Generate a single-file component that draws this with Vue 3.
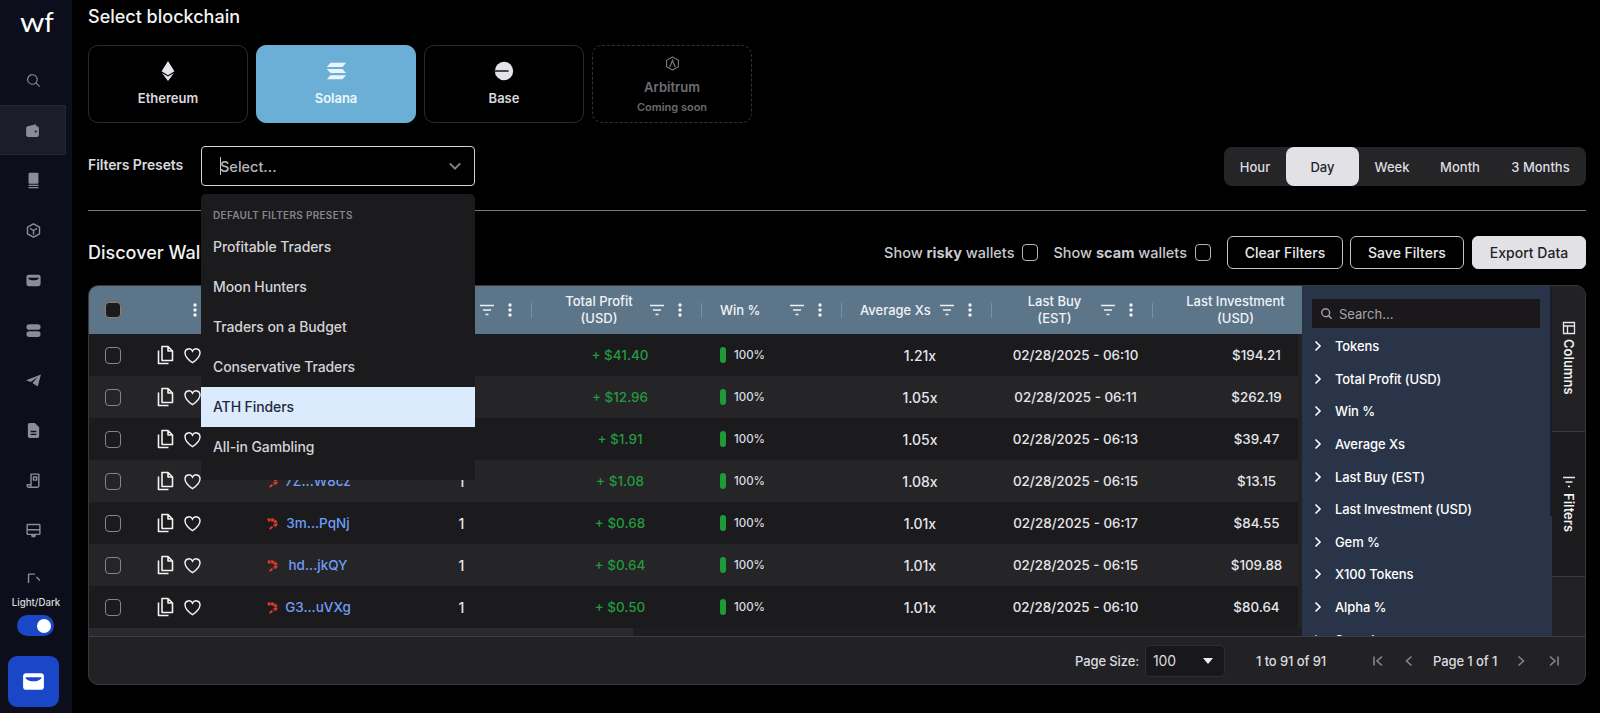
<script setup>
const navIcons = [
  { d: 'M10.5 3a7.5 7.5 0 1 0 4.7 13.3l5 5 1.1-1.1-5-5A7.5 7.5 0 0 0 10.5 3zm0 1.5a6 6 0 1 1 0 12 6 6 0 0 1 0-12z' },
  { d: 'M3 8.5A2.5 2.5 0 0 1 5.5 6L17 3v3h1.5A2.5 2.5 0 0 1 21 8.5v10a2.5 2.5 0 0 1-2.5 2.5h-13A2.5 2.5 0 0 1 3 18.5zM15 13.5a1.5 1.5 0 1 0 3 0 1.5 1.5 0 0 0-3 0z', active: true },
  { d: 'M6.5 1h11A1.5 1.5 0 0 1 19 2.500V15a1.500 1.500 0 0 1-1.500 1.500h-11A1.500 1.500 0 0 1 5 15V2.500A1.500 1.500 0 0 1 6.500 1zM5 18h14v1.800H5zM5 21h14v1.800H5z' },
  { d: 'M12 2.500l8.500 4.800v9.400L12 21.500l-8.500-4.800V7.300zM12 12l-5-3M12 12l5-3M12 12v6', stroke: true },
  { d: 'M5 4h14a3 3 0 0 1 3 3v10a3 3 0 0 1-3 3H5a3 3 0 0 1-3-3V7a3 3 0 0 1 3-3zM4.500 8h15v1c-2 2-4.500 2.700-7.500 2.700S6.500 11 4.500 9z' },
  { d: 'M6 3h12a4 4 0 0 1 0 8H6a4 4 0 0 1 0-8zM6 13h12a4 4 0 0 1 0 8H6a4 4 0 0 1 0-8z' },
  { d: 'M22.500 3.500L1.500 11.500l6.500 2.500L18 7l-7.500 8.500L18 20.500z' },
  { d: 'M6.500 1.500H14l6 6V20a2.500 2.500 0 0 1-2.500 2.500h-11A2.500 2.500 0 0 1 4 20V4a2.500 2.500 0 0 1 2.500-2.500zM8 12.500v2h8v-2zM8 16.500v2h8v-2z' },
  { d: 'M7 21.500h10.500a2 2 0 0 0 2-2V3h-11v16.500a2 2 0 0 1-2 2H5a2 2 0 0 1-2-2V18h5.500M12 7h4.500v4.500H12z', stroke: true },
  { d: 'M4 2.500h16a2 2 0 0 1 2 2v12a2 2 0 0 1-2 2h-4.500l-1 3h-5l-1-3H4a2 2 0 0 1-2-2v-12a2 2 0 0 1 2-2zM4 4.500V10h16V4.500zM4 12v4.500h16V12z' },
  { d: 'M14 3H5v18h9M16 7l5 5', stroke: true }
]

const chains = [
  { name: 'Ethereum', key: 'eth' },
  { name: 'Solana', key: 'sol' },
  { name: 'Base', key: 'base' }
]

const presets = ['Profitable Traders', 'Moon Hunters', 'Traders on a Budget', 'Conservative Traders', 'ATH Finders', 'All-in Gambling']
const ranges = ['Hour', 'Day', 'Week', 'Month', '3 Months']

const headers = [
  { label: 'Total Profit\n(USD)', center: true },
  { label: 'Win %' },
  { label: 'Average Xs' },
  { label: 'Last Buy\n(EST)', center: true },
  { label: 'Last Investment\n(USD)', center: true }
]

const rows = [
  { addr: '', profit: '+ $41.40', xs: '1.21x', date: '02/28/2025 - 06:10', inv: '$194.21' },
  { addr: '', profit: '+ $12.96', xs: '1.05x', date: '02/28/2025 - 06:11', inv: '$262.19' },
  { addr: '', profit: '+ $1.91', xs: '1.05x', date: '02/28/2025 - 06:13', inv: '$39.47' },
  { addr: '7Z...W8cz', profit: '+ $1.08', xs: '1.08x', date: '02/28/2025 - 06:15', inv: '$13.15' },
  { addr: '3m...PqNj', profit: '+ $0.68', xs: '1.01x', date: '02/28/2025 - 06:17', inv: '$84.55' },
  { addr: 'hd...jkQY', profit: '+ $0.64', xs: '1.01x', date: '02/28/2025 - 06:15', inv: '$109.88' },
  { addr: 'G3...uVXg', profit: '+ $0.50', xs: '1.01x', date: '02/28/2025 - 06:10', inv: '$80.64' }
]

const columns = ['Tokens', 'Total Profit (USD)', 'Win %', 'Average Xs', 'Last Buy (EST)', 'Last Investment (USD)', 'Gem %', 'X100 Tokens', 'Alpha %', 'Spend']
</script>

<template>
  <div class="page">
    <aside class="sidebar">
      <div class="logo"><span class="logo-w">w</span>f</div>
      <nav class="nav">
        <div v-for="(ic, i) in navIcons" :key="i" class="nav-item" :class="{ active: ic.active }">
          <svg class="nav-icon" viewBox="0 0 24 24">
            <path v-if="ic.stroke" :d="ic.d" fill="none" stroke="currentColor" stroke-width="2" stroke-linejoin="round" />
            <path v-else :d="ic.d" fill="currentColor" fill-rule="evenodd" />
          </svg>
        </div>
      </nav>
      <div class="mode">
        <span class="mode-label">Light/Dark</span>
        <span class="toggle"><span class="knob"></span></span>
      </div>
      <button class="wallet-btn">
        <svg viewBox="0 0 24 24" width="25" height="25">
          <path fill="#fff" fill-rule="evenodd" d="M5 4h14a3 3 0 0 1 3 3v10a3 3 0 0 1-3 3H5a3 3 0 0 1-3-3V7a3 3 0 0 1 3-3zM4.500 8h15v1c-2 2-4.500 2.700-7.500 2.700S6.500 11 4.500 9z" />
        </svg>
      </button>
    </aside>

    <main class="main">
      <h1 class="title">Select blockchain</h1>

      <div class="chains">
        <div v-for="c in chains" :key="c.key" class="chain" :class="{ selected: c.key === 'sol' }">
          <svg v-if="c.key === 'eth'" class="chain-icon" viewBox="0 0 24 24" width="22" height="22">
            <path fill="#e6e6ea" d="M12 1L5 12.400 12 16.500l7-4.100z" />
            <path fill="#e6e6ea" d="M5.500 14.200L12 23l6.500-8.800L12 18z" />
          </svg>
          <svg v-else-if="c.key === 'sol'" class="chain-icon" viewBox="0 0 24 24" width="22" height="22">
            <path fill="#e9f5fc" d="M6 3h17l-4 4.500H2zM2 9.800h17l4 4.500H6zM6 16.500h17l-4 4.500H2z" />
          </svg>
          <svg v-else class="chain-icon" viewBox="0 0 24 24" width="22" height="22">
            <circle cx="12" cy="12" r="10" fill="#e4e4e8" />
            <rect x="2" y="11" width="15" height="2" fill="#3a3a3e" />
          </svg>
          <span class="chain-name">{{ c.name }}</span>
        </div>
        <div class="chain soon">
          <svg viewBox="0 0 24 24" width="15" height="15">
            <path fill="none" stroke="#77777b" stroke-width="1.800" d="M12 1.500l9.500 5.300v10.400L12 22.500l-9.500-5.300V6.800z" />
            <path fill="none" stroke="#77777b" stroke-width="2" d="M7.500 18L12 7l4.500 11" />
          </svg>
          <span class="soon-name">Arbitrum</span>
          <span class="soon-sub">Coming soon</span>
        </div>
      </div>

      <div class="preset-row">
        <span class="preset-label">Filters Presets</span>
        <div class="select-wrap">
          <div class="select">
            <span class="caret"></span>
            <span class="select-text">Select...</span>
            <svg class="select-chev" viewBox="0 0 16 16" width="14" height="14">
              <path d="M2 5L8 11l6-6" fill="none" stroke="#858585" stroke-width="2.200" />
            </svg>
          </div>
          <div class="menu">
            <div class="menu-head">DEFAULT FILTERS PRESETS</div>
            <div v-for="p in presets" :key="p" class="menu-item" :class="{ focus: p === 'ATH Finders' }">{{ p }}</div>
          </div>
        </div>
        <div class="ranges">
          <span v-for="r in ranges" :key="r" class="range" :class="{ on: r === 'Day' }">{{ r }}</span>
        </div>
      </div>

      <hr class="divider" />

      <div class="toolbar">
        <h2 class="discover">Discover Wallets</h2>
        <div class="tools">
          <label class="show">Show <b>risky</b> wallets<span class="box"></span></label>
          <label class="show">Show <b>scam</b> wallets<span class="box"></span></label>
          <button class="btn clear">Clear Filters</button>
          <button class="btn save">Save Filters</button>
          <button class="btn export">Export Data</button>
        </div>
      </div>

      <section class="table">
        <div class="table-top">
          <div class="center">
            <div class="thead grid">
              <div class="th first">
                <span class="hcheck"></span>
                <svg class="dots dots-first" viewBox="0 0 14 16" width="14" height="16"><circle cx="7" cy="3" r="1.700" /><circle cx="7" cy="8" r="1.700" /><circle cx="7" cy="13" r="1.700" /></svg>
              </div>
              <div class="th"></div>
              <div class="th ctrl sep">
                <svg class="fil" viewBox="0 0 18 14" width="18" height="14"><path d="M2 2.500h14M5 7h8M7.500 11.500h3" /></svg>
                <svg class="dots" viewBox="0 0 14 16" width="14" height="16"><circle cx="7" cy="3" r="1.700" /><circle cx="7" cy="8" r="1.700" /><circle cx="7" cy="13" r="1.700" /></svg>
              </div>
              <div v-for="(h, i) in headers" :key="h.label" class="th ctrl" :class="{ sep: i < 4 }">
                <span class="hlabel" :class="{ centered: h.center }">{{ h.label }}</span>
                <svg class="fil" viewBox="0 0 18 14" width="18" height="14"><path d="M2 2.500h14M5 7h8M7.500 11.500h3" /></svg>
                <svg class="dots" viewBox="0 0 14 16" width="14" height="16"><circle cx="7" cy="3" r="1.700" /><circle cx="7" cy="8" r="1.700" /><circle cx="7" cy="13" r="1.700" /></svg>
              </div>
            </div>
            <div class="tbody">
              <div v-for="(r, i) in rows" :key="i" class="grid row" :class="{ alt: i % 2 === 1 }">
                <div class="td actions">
                  <span class="rcheck"></span>
                  <svg class="copy" viewBox="0 0 18 20" width="18" height="20">
                    <path d="M6 1.500h6l4.500 4.500v9.500H6zM12 1.500V6h4.500M2.500 5.500v13h10" />
                  </svg>
                  <svg class="heart" viewBox="0 0 24 24" width="19" height="19">
                    <path d="M12 21S2.500 15 2.500 8.600A5 5 0 0 1 12 6.400a5 5 0 0 1 9.500 2.200C21.500 15 12 21 12 21z" />
                  </svg>
                </div>
                <div class="td addr">
                  <template v-if="r.addr">
                    <svg class="shrimp" viewBox="0 0 16 14" width="15" height="13">
                      <path d="M0.500 0.500L4 2" stroke="#3b1512" stroke-width="1" fill="none" />
                      <path d="M4 3.500c4.500-1.500 8.500 .5 9 3 .3 2-1.500 2.500-3 3" stroke="#e33b2c" stroke-width="3.400" fill="none" stroke-dasharray="3 .6" />
                      <path d="M9 10.500l-3 2.500" stroke="#e33b2c" stroke-width="2" fill="none" />
                    </svg>
                    <span class="addr-text">{{ r.addr }}</span>
                  </template>
                </div>
                <div class="td num one">1</div>
                <div class="td profit shift">{{ r.profit }}</div>
                <div class="td win"><span class="bar"></span><span class="pct">100%</span></div>
                <div class="td num shift">{{ r.xs }}</div>
                <div class="td num shift date">{{ r.date }}</div>
                <div class="td num shift date">{{ r.inv }}</div>
              </div>
            </div>
            <div class="hscroll"><span class="thumb"></span></div>
          </div>

          <div class="panel">
            <div class="psearch">
              <svg viewBox="0 0 24 24" width="13" height="13">
                <path fill="#a8a8a8" fill-rule="evenodd" d="M10.500 2a8.500 8.500 0 1 0 5 15.400l5 5 1.800-1.800-5-5A8.500 8.500 0 0 0 10.500 2zm0 2.500a6 6 0 1 1 0 12 6 6 0 0 1 0-12z" />
              </svg>
              <span>Search...</span>
            </div>
            <div class="plist">
              <div v-for="c in columns" :key="c" class="pitem">
                <svg viewBox="0 0 10 12" width="10" height="12"><path d="M2.500 1.500L7 6l-4.500 4.500" fill="none" stroke="#fff" stroke-width="1.600" /></svg>
                <span>{{ c }}</span>
              </div>
            </div>
            <span class="pscroll"></span>
          </div>

          <div class="rail">
            <div class="tab columns">
              <svg viewBox="0 0 14 14" width="14" height="14"><path d="M1.500 1.500h11v11h-11zM1.500 5h11M5.500 5v7.500" fill="none" stroke="#e8e8e8" stroke-width="1.300" /></svg>
              <span>Columns</span>
            </div>
            <div class="tab filters">
              <svg viewBox="0 0 14 14" width="14" height="14"><path d="M1 2.500h12M3.500 7h7M6 11.500h2" fill="none" stroke="#e8e8e8" stroke-width="1.500" /></svg>
              <span>Filters</span>
            </div>
          </div>
        </div>

        <footer class="pager">
          <span class="psize">Page Size:</span>
          <div class="size-box"><span>100</span><i class="tri"></i></div>
          <span class="count">1 to 91 of 91</span>
          <svg class="pg first-pg" viewBox="0 0 12 12" width="12" height="12"><path d="M2 1.500v9M10 1.500L5 6l5 4.500" /></svg>
          <svg class="pg prev-pg" viewBox="0 0 12 12" width="12" height="12"><path d="M8.500 1.500L3.500 6l5 4.500" /></svg>
          <span class="pageof">Page 1 of 1</span>
          <svg class="pg next-pg" viewBox="0 0 12 12" width="12" height="12"><path d="M3.500 1.500L8.500 6l-5 4.500" /></svg>
          <svg class="pg last-pg" viewBox="0 0 12 12" width="12" height="12"><path d="M10 1.500v9M2 1.500L7 6l-5 4.500" /></svg>
        </footer>
      </section>
    </main>
  </div>
</template>

<style>
html, body { margin: 0; background: #000; }
</style>

<style scoped>
.page {
  display: flex;
  width: 1600px;
  height: 713px;
  overflow: hidden;
  background: #000;
  color: #e6e6ea;
  font-family: "Inter", "Liberation Sans", sans-serif;
  font-size: 14px;
  font-weight: 500;
}
.sidebar {
  width: 72px;
  flex: none;
  background: #0c0f1b;
  display: flex;
  flex-direction: column;
}
.logo {
  height: 55px;
  box-sizing: border-box;
  padding: 3px 0 0 20px;
  font-family: "Lato", sans-serif;
  font-size: 27px;
  line-height: 38px;
  font-weight: 400;
  color: #fff;
}
.logo-w { display: inline-block; transform: scaleX(1.150); transform-origin: left; margin-right: 3px; }
.nav { height: 528px; overflow: hidden; flex: none; }
.nav-item {
  width: 66px;
  height: 50px;
  box-sizing: border-box;
  display: flex;
  align-items: center;
  justify-content: center;
  color: #8a8c98;
}
.nav-item.active { background: #1b1d28; border: 1px solid #23252f; border-left: 0; }
.nav-icon { width: 17px; height: 17px; }
.mode { display: flex; flex-direction: column; align-items: center; height: 73px; width: 72px; box-sizing: border-box; padding-top: 14px; }
.mode-label { font-size: 9.700px; line-height: 12px; color: #dcdcdc; }
.toggle {
  margin: 6px 0 0 -2px;
  width: 37px;
  height: 21px;
  border-radius: 11px;
  background: #1a47c8;
  display: flex;
  align-items: center;
  justify-content: flex-end;
  padding-right: 3px;
  box-sizing: border-box;
}
.knob { width: 14px; height: 14px; border-radius: 50%; background: #fff; }
.wallet-btn {
  margin-left: 8px;
  width: 51px;
  height: 51px;
  border: 0;
  padding: 0;
  border-radius: 9px;
  background: #1a47c8;
  display: flex;
  align-items: center;
  justify-content: center;
}

.main { flex: 1; min-width: 0; padding: 0 14px 0 16px; }
.title { margin: 0; height: 32px; font-size: 18px; line-height: 33px; font-weight: 500; color: #f2f2f2; }

.chains { display: flex; gap: 8px; margin-top: 13px; }
.chain {
  width: 160px;
  height: 78px;
  box-sizing: border-box;
  border: 1px solid #2b2b2e;
  border-radius: 10px;
  display: flex;
  flex-direction: column;
  align-items: center;
  padding-top: 14px;
}
.chain-name { margin-top: 8px; font-size: 13px; line-height: 16px; font-weight: 600; color: #d9d9de; }
.chain.selected { background: #6bafd6; border-color: #6bafd6; }
.chain.selected .chain-name { color: #eef7fc; }
.chain.soon { border: 1px dashed #333336; padding-top: 10px; }
.soon-name { margin-top: 7px; font-size: 13px; line-height: 18px; font-weight: 600; color: #6e6e72; }
.soon-sub { margin-top: 4px; font-size: 11px; line-height: 14px; font-weight: 600; color: #69696d; }

.preset-row { display: flex; align-items: flex-start; margin-top: 23px; height: 40px; }
.preset-label { width: 113px; font-size: 14px; line-height: 38px; font-weight: 600; letter-spacing: -.1px; color: #d9d9de; }
.select-wrap { position: relative; width: 274px; height: 40px; z-index: 5; }
.select {
  height: 40px;
  box-sizing: border-box;
  border: 1px solid #d4d4d4;
  border-radius: 4px;
  display: flex;
  align-items: center;
  padding: 0 12px 0 18px;
  position: relative;
}
.caret { position: absolute; left: 18px; top: 10px; width: 1px; height: 18px; background: #c8c8c8; }
.select-text { flex: 1; font-size: 14.500px; font-weight: 500; color: #b8b8bc; }
.menu {
  position: absolute;
  left: 0;
  top: 48px;
  width: 274px;
  height: 286px;
  box-sizing: border-box;
  background: #1b1a1d;
  border-radius: 5px 5px 0 0;
}
.menu-head { height: 33px; box-sizing: border-box; padding: 15px 0 0 12px; font-size: 10px; line-height: 13px; font-weight: 600; letter-spacing: .3px; color: #858589; }
.menu-item { height: 40px; padding-left: 12px; line-height: 40px; font-size: 14px; font-weight: 500; letter-spacing: -.1px; color: #d4d4d8; }
.menu-item.focus { background: #dceafe; color: #1f2a3a; }
.ranges {
  margin: 1px 0 0 auto;
  display: grid;
  grid-template-columns: 62px 73px 66px 70px 91px;
  height: 39px;
  background: #252427;
  border-radius: 8px;
}
.range { display: flex; align-items: center; justify-content: center; font-size: 13px; color: #dcdce0; }
.range.on { background: #e2e2e6; color: #26262a; border-radius: 8px; }

.divider { margin: 24px 0 0; border: 0; height: 1px; background: #77777a; }

.toolbar { display: flex; align-items: center; justify-content: space-between; height: 34px; margin-top: 24px; }
.discover { margin: 0; font-size: 18px; font-weight: 500; color: #f2f2f2; }
.tools { display: flex; align-items: center; }
.show { display: flex; align-items: center; font-size: 14.500px; font-weight: 500; color: #c9c9cd; white-space: pre; margin-right: 15px; }
.show b { font-weight: 700; }
.box { width: 16px; height: 17px; box-sizing: border-box; border: 1px solid #b5b5b5; border-radius: 4px; margin-left: 8px; }
.btn {
  height: 33px;
  box-sizing: border-box;
  border: 1px solid #c4c4c4;
  border-radius: 6px;
  background: #000;
  color: #e8e8ea;
  font: inherit;
  font-size: 14px;
  padding: 0;
}
.clear { width: 116px; margin-left: 1px; }
.save { width: 114px; margin-left: 7px; }
.export { width: 114px; margin-left: 8px; background: #e2e2e6; color: #222; border-color: #e2e2e6; }

.table {
  margin-top: 16px;
  height: 400px;
  box-sizing: border-box;
  border: 1px solid #38383c;
  border-radius: 10px;
  overflow: hidden;
  background: #222124;
  display: flex;
  flex-direction: column;
}
.table-top { height: 350px; display: flex; flex: none; }
.center { width: 1213px; flex: none; overflow: hidden; display: flex; flex-direction: column; }
.grid { display: grid; grid-template-columns: 149px 156px 138px 170px 140px 150px 161px 201px; width: 1265px; }
.thead { height: 48px; background: #5d7589; flex: none; }
.th { display: flex; align-items: center; position: relative; }
.th.first { padding-left: 16px; }
.hcheck { width: 16px; height: 16px; box-sizing: border-box; background: #1b1a1d; border: 1px solid #8e7d70; border-radius: 4px; }
.dots { fill: #f0f3f6; flex: none; }
.dots-first { margin-left: 67px; }
.fil { fill: none; stroke: #eef1f4; stroke-width: 1.500; flex: none; }
.ctrl { justify-content: flex-end; padding-right: 15px; }
.ctrl .fil { margin-right: 7px; }
.sep::after { content: ""; position: absolute; right: 0; top: 17px; width: 1px; height: 15px; background: #7a8fa1; }
.hlabel { flex: 1; padding-left: 18px; font-size: 13px; line-height: 17px; font-weight: 500; color: #f0f3f6; white-space: pre-line; }
.hlabel.centered { text-align: center; }
.tbody { margin-right: 4px; overflow: hidden; height: 294px; flex: none; }
.row { height: 42px; background: #1b1a1d; }
.row.alt { background: #252427; }
.td { display: flex; align-items: center; justify-content: center; }
.actions { justify-content: flex-start; padding-left: 16px; }
.rcheck { width: 16px; height: 17px; box-sizing: border-box; border: 1.500px solid #85858a; border-radius: 4px; }
.copy { margin-left: 35px; fill: none; stroke: #f2f2f2; stroke-width: 1.600; stroke-linejoin: round; }
.heart { margin-left: 9px; fill: none; stroke: #f2f2f2; stroke-width: 1.800; }
.addr { justify-content: flex-start; padding-left: 26px; }
.shrimp { flex: none; }
.addr-text { width: 78px; text-align: center; font-size: 13.500px; color: #6f9df5; }
.num { font-size: 14px; color: #e6e6ea; }
.one { padding-right: 3px; }
.shift { padding-left: 6px; }
.date { font-size: 13.400px; }
.profit { font-size: 13.500px; color: #239a3e; }
.win { justify-content: flex-start; padding-left: 18px; }
.bar { width: 6px; height: 16px; border-radius: 3px; background: #1f9a38; }
.pct { margin-left: 8px; font-size: 11.500px; color: #dcdce0; }
.hscroll { flex: 1; background: #1e1d20; }
.thumb { display: block; width: 544px; height: 100%; background: #2a292d; }

.panel { position: relative; width: 250px; flex: none; background: #2a3448; overflow: hidden; }
.psearch {
  margin: 13px 12px 0 10px;
  height: 29px;
  background: #1a181b;
  display: flex;
  align-items: center;
  padding-left: 8px;
  gap: 6px;
  font-size: 13px;
  font-weight: 400;
  color: #a5a5aa;
}
.plist { margin-top: 2px; }
.pitem { display: flex; align-items: center; height: 32.600px; padding-left: 11px; gap: 12px; font-size: 13px; letter-spacing: -.1px; color: #fff; }
.pscroll { position: absolute; right: 0; top: 0; width: 2px; height: 230px; background: #181d2b; }

.rail { flex: 1; display: flex; flex-direction: column; background: #222124; }
.tab {
  box-sizing: border-box;
  display: flex;
  flex-direction: column;
  align-items: center;
  gap: 4px;
  border-bottom: 1px solid #3a3a3e;
}
.tab span { writing-mode: vertical-rl; font-size: 13px; font-weight: 600; line-height: 16px; color: #f2f2f2; }
.columns { height: 146px; padding-top: 35px; }
.filters { height: 145px; padding-top: 43px; background: #1c1b1e; }

.pager {
  flex: 1;
  border-top: 1px solid #3e3e44;
  display: flex;
  align-items: center;
  font-size: 13px;
  font-weight: 500;
  letter-spacing: -.1px;
  color: #dcdce0;
  padding-left: 986px;
}
.psize { width: 70px; flex: none; white-space: nowrap; }
.size-box {
  width: 80px;
  height: 32px;
  box-sizing: border-box;
  border: 1px solid #2f2e33;
  border-radius: 5px;
  background: #18171a;
  display: flex;
  align-items: center;
  justify-content: space-between;
  padding: 0 11px 0 7px;
  font-size: 14px;
  font-weight: 400;
  flex: none;
}
.tri { width: 0; height: 0; border-left: 5px solid transparent; border-right: 5px solid transparent; border-top: 6px solid #f0f0f0; }
.count { margin-left: 31px; width: 72px; flex: none; white-space: nowrap; }
.pg { fill: none; stroke: #858589; stroke-width: 1.600; flex: none; }
.first-pg { margin-left: 44px; }
.prev-pg { margin-left: 19px; }
.pageof { margin-left: 18px; width: 64px; flex: none; white-space: nowrap; }
.next-pg { margin-left: 18px; }
.last-pg { margin-left: 21px; }
</style>
